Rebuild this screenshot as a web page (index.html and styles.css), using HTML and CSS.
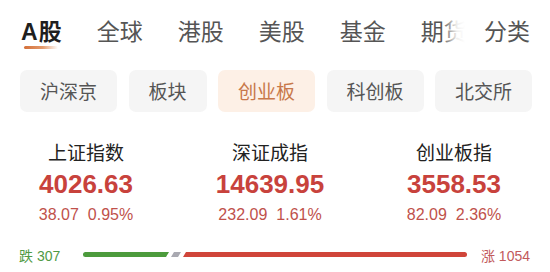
FILE: index.html
```html
<!DOCTYPE html>
<html lang="zh-CN">
<head>
<meta charset="utf-8">
<title>A股</title>
<link rel="stylesheet" href="styles.css">
</head>
<body>
<div class="page">
  <nav class="nav">
    <div class="tabs">
      <span class="tab active"><span class="latin">A</span>股</span>
      <span class="tab">全球</span>
      <span class="tab">港股</span>
      <span class="tab">美股</span>
      <span class="tab">基金</span>
      <span class="tab">期货</span>
    </div>
    <span class="tab more">分类</span>
  </nav>

  <div class="chips">
    <span class="chip">沪深京</span>
    <span class="chip">板块</span>
    <span class="chip on">创业板</span>
    <span class="chip">科创板</span>
    <span class="chip">北交所</span>
  </div>

  <div class="indices">
    <div class="idx">
      <div class="idx-name">上证指数</div>
      <div class="idx-val">4026.63</div>
      <div class="idx-chg"><span>38.07</span><span class="pct">0.95%</span></div>
    </div>
    <div class="idx">
      <div class="idx-name">深证成指</div>
      <div class="idx-val">14639.95</div>
      <div class="idx-chg"><span>232.09</span><span class="pct">1.61%</span></div>
    </div>
    <div class="idx">
      <div class="idx-name">创业板指</div>
      <div class="idx-val">3558.53</div>
      <div class="idx-chg"><span>82.09</span><span class="pct">2.36%</span></div>
    </div>
  </div>

  <div class="breadth">
    <span class="down">跌 307</span>
    <svg class="bar" viewBox="0 0 384 5" preserveAspectRatio="none">
      <path d="M2.5 0 H86 L83 5 H2.5 A2.5 2.5 0 0 1 2.5 0 Z" fill="#4c9b3c"/>
      <path d="M91 0 H98 L95 5 H88 Z" fill="#a9a9b1"/>
      <path d="M103 0 H381.5 A2.5 2.5 0 0 1 381.5 5 H100 Z" fill="#d0453a"/>
    </svg>
    <span class="up">涨 1054</span>
  </div>
</div>
</body>
</html>
```

FILE: styles.css
```css
* { box-sizing: border-box; }
html, body { margin: 0; padding: 0; background: #fff; }
body {
  font-family: "Noto Sans CJK SC", "Noto Sans", sans-serif;
  width: 550px;
  height: 272px;
  overflow: hidden;
}
.page { width: 550px; }

.nav {
  display: flex;
  align-items: flex-start;
  height: 60px;
  padding: 13px 20px 0 21px;
}
.tabs {
  display: flex;
  gap: 35px;
  flex: 1;
  overflow: hidden;
  white-space: nowrap;
  padding-bottom: 6px;
}
.tab {
  position: relative;
  font-size: 23px;
  line-height: 34px;
  color: #555;
  flex: none;
}
.tab.active {
  color: #1f1f1f;
  font-weight: 600;
}
.tab.active .latin {
  font-family: "Liberation Sans", Arial, sans-serif;
  font-weight: 700;
  margin-right: 1px;
}
.tab.active::after {
  content: "";
  position: absolute;
  left: 3px;
  top: 33px;
  width: 34px;
  height: 3px;
  border-radius: 2px;
  background: linear-gradient(90deg, #d46f38 0%, #e39a6c 55%, rgba(240, 190, 160, 0) 100%);
}
.tab.more {
  position: relative;
  margin-left: 3px;
}
.tab.more::before {
  content: "";
  position: absolute;
  left: -42px;
  top: 0;
  width: 42px;
  height: 34px;
  background: linear-gradient(90deg, rgba(255,255,255,0) 0%, rgba(255,255,255,0.9) 35%, #fff 55%);
}

.chips {
  display: flex;
  gap: 11.5px;
  margin-top: 10px;
  padding-left: 20px;
}
.chip {
  height: 42px;
  padding: 0 20px;
  border-radius: 7px;
  background: #f5f5f5;
  color: #555;
  font-size: 19px;
  line-height: 42px;
  white-space: nowrap;
}
.chip.on {
  background: #fdf0e6;
  color: #c8784a;
}

.indices {
  display: grid;
  grid-template-columns: 184px 184px 184px;
  margin: 27px 0 0 -6px;
  text-align: center;
}
.idx-name {
  font-size: 19px;
  line-height: 26px;
  color: #222;
}
.idx-val {
  margin-top: 4px;
  font-family: "Liberation Sans", Arial, sans-serif;
  font-weight: 700;
  font-size: 26px;
  line-height: 30px;
  color: #c8423c;
}
.idx-chg {
  margin-top: 6px;
  font-family: "Liberation Sans", Arial, sans-serif;
  font-size: 16px;
  line-height: 20px;
  color: #c0514b;
}
.idx-chg .pct { margin-left: 9px; }

.breadth {
  display: flex;
  align-items: center;
  height: 26px;
  margin-top: 17px;
  padding: 0 20px 0 19px;
  font-family: "Liberation Sans", "Noto Sans CJK SC", sans-serif;
  font-size: 14px;
  white-space: nowrap;
}
.down { color: #4f9a45; width: 43px; }
.up { color: #c25a5c; margin-left: auto; }
.bar {
  display: block;
  width: 384px;
  height: 5px;
  margin-left: 21px;
  margin-top: -1px;
}
```
